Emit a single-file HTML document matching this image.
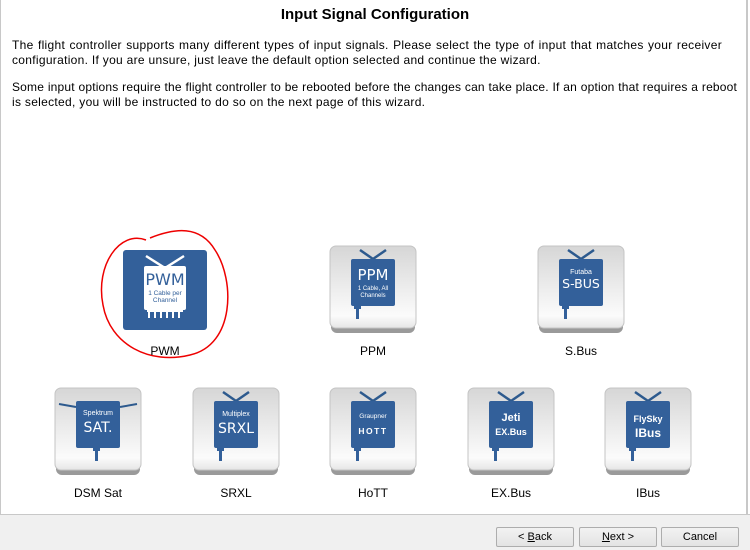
<!DOCTYPE html>
<html><head><meta charset="utf-8"><style>
*{margin:0;padding:0;box-sizing:border-box}
body{width:750px;height:550px;background:#fff;font-family:"Liberation Sans",sans-serif;position:relative;overflow:hidden;color:#000}
.t{position:absolute;font-size:12px;line-height:15px;left:12px;white-space:nowrap;letter-spacing:0.3px;text-align:justify;text-align-last:justify}
h1{position:absolute;top:6px;left:0;width:750px;text-align:center;font-size:15px;font-weight:bold}
.lbl{position:absolute;font-size:12px;width:120px;text-align:center}
.bar{position:absolute;left:0;top:514px;width:750px;height:36px;background:#f0f0f0;border-top:1px solid #c8c8c8}
.btn{position:absolute;top:527px;width:78px;height:20px;border:1px solid #adadad;border-radius:2px;background:linear-gradient(#f2f2f2,#e3e3e3);font-size:11px;text-align:center;line-height:18px}
</style></head><body>
<div style="position:absolute;left:0;top:0;width:1px;height:514px;background:#c8c8c8"></div>
<div style="position:absolute;left:746px;top:0;width:2px;height:514px;background:#c8c8c8"></div>
<h1>Input Signal Configuration</h1>
<div class="t" style="top:38px;width:710px">The flight controller supports many different types of input signals. Please select the type of input that matches your receiver</div>
<div class="t" style="top:53px;width:518px">configuration. If you are unsure, just leave the default option selected and continue the wizard.</div>
<div class="t" style="top:80px;width:725px;letter-spacing:0.18px">Some input options require the flight controller to be rebooted before the changes can take place. If an option that requires a reboot</div>
<div class="t" style="top:95px;width:404px">is selected, you will be instructed to do so on the next page of this wizard.</div>

<svg width="750" height="514" style="position:absolute;left:0;top:0">
<defs>
<linearGradient id="g" x1="0" y1="0" x2="0" y2="1"><stop offset="0" stop-color="#d6d6d6"/><stop offset="0.5" stop-color="#ececec"/><stop offset="0.85" stop-color="#fbfbfb"/><stop offset="1" stop-color="#e6e6e6"/></linearGradient>
<g id="frame"><rect x="1" y="3" width="84" height="84" rx="6" fill="#9a9a9a"/><rect x="0" y="0" width="86" height="82" rx="6" fill="url(#g)" stroke="#c4c4c4"/></g>
<g id="tv"><path d="M30 4 L43 13 L56 4" stroke="#2d5a8e" stroke-width="2.5" fill="none"/><rect x="21" y="13" width="44" height="47" rx="2" fill="#33609a"/><rect x="26" y="60" width="3" height="13" fill="#33609a"/><rect x="24" y="60" width="7" height="3" fill="#33609a"/></g>
</defs>
<rect x="123" y="250" width="84" height="80" rx="3" fill="#33609a"/>
<path d="M146 256 L165 268 L184 256" stroke="#fff" stroke-width="2.5" fill="none"/>
<rect x="144" y="266" width="42" height="44" rx="2" fill="#fff"/>
<text x="165" y="285" font-size="16" fill="#33609a" text-anchor="middle" font-family="DejaVu Sans">PWM</text>
<text x="165" y="295" font-size="6.5" fill="#33609a" text-anchor="middle">1 Cable per</text>
<text x="165" y="302" font-size="6.5" fill="#33609a" text-anchor="middle">Channel</text>
<g fill="#fff"><rect x="147" y="310" width="36" height="2"/><rect x="148" y="310" width="2" height="8"/><rect x="154" y="310" width="2" height="8"/><rect x="160" y="310" width="2" height="8"/><rect x="166" y="310" width="2" height="8"/><rect x="172" y="310" width="2" height="8"/><rect x="178" y="310" width="2" height="8"/></g>
<path d="M146 240 C120 230 95 265 103 305 C110 345 150 365 190 355 C235 345 235 280 215 250 C200 225 175 228 150 238" stroke="#e00" stroke-width="1.5" fill="none"/>

<g transform="translate(330,246)"><use href="#frame"/><use href="#tv"/>
<text x="43" y="34" font-size="15" fill="#fff" text-anchor="middle" font-family="DejaVu Sans">PPM</text>
<text x="43" y="44" font-size="6" fill="#fff" text-anchor="middle">1 Cable, All</text>
<text x="43" y="51" font-size="6" fill="#fff" text-anchor="middle">Channels</text></g>

<g transform="translate(538,246)"><use href="#frame"/><use href="#tv"/>
<text x="43" y="28" font-size="7" fill="#fff" text-anchor="middle">Futaba</text>
<text x="43" y="42" font-size="12.5" fill="#fff" text-anchor="middle" font-family="DejaVu Sans">S-BUS</text></g>

<g transform="translate(55,388)"><use href="#frame"/><rect x="21" y="13" width="44" height="47" rx="2" fill="#33609a"/><path d="M4 16 L21 19 M65 19 L82 16" stroke="#2d5a8e" stroke-width="2"/><rect x="40" y="60" width="3" height="13" fill="#33609a"/><rect x="38" y="60" width="7" height="3" fill="#33609a"/>
<text x="43" y="27" font-size="7" fill="#fff" text-anchor="middle">Spektrum</text>
<text x="43" y="44" font-size="14" fill="#fff" text-anchor="middle" font-family="DejaVu Sans">SAT.</text></g>

<g transform="translate(193,388)"><use href="#frame"/><use href="#tv"/>
<text x="43" y="28" font-size="7" fill="#fff" text-anchor="middle">Multiplex</text>
<text x="43" y="45" font-size="14" fill="#fff" text-anchor="middle" font-family="DejaVu Sans">SRXL</text></g>

<g transform="translate(330,388)"><use href="#frame"/><use href="#tv"/>
<text x="43" y="30" font-size="6.5" fill="#fff" text-anchor="middle">Graupner</text>
<text x="43" y="46" font-size="8.5" font-weight="bold" letter-spacing="1.5" fill="#fff" text-anchor="middle">HOTT</text></g>

<g transform="translate(468,388)"><use href="#frame"/><use href="#tv"/>
<text x="43" y="33" font-size="11" font-weight="bold" fill="#fff" text-anchor="middle">Jeti</text>
<text x="43" y="47" font-size="9" font-weight="bold" fill="#fff" text-anchor="middle">EX.Bus</text></g>

<g transform="translate(605,388)"><use href="#frame"/><use href="#tv"/>
<text x="43" y="34" font-size="9" font-weight="bold" fill="#fff" text-anchor="middle">FlySky</text>
<text x="43" y="49" font-size="12" font-weight="bold" fill="#fff" text-anchor="middle">IBus</text></g>
</svg>

<div class="lbl" style="left:105px;top:344px">PWM</div>
<div class="lbl" style="left:313px;top:344px">PPM</div>
<div class="lbl" style="left:521px;top:344px">S.Bus</div>
<div class="lbl" style="left:38px;top:486px">DSM Sat</div>
<div class="lbl" style="left:176px;top:486px">SRXL</div>
<div class="lbl" style="left:313px;top:486px">HoTT</div>
<div class="lbl" style="left:451px;top:486px">EX.Bus</div>
<div class="lbl" style="left:588px;top:486px">IBus</div>

<div class="bar"></div>
<div class="btn" style="left:496px">&lt; <u>B</u>ack</div>
<div class="btn" style="left:579px"><u>N</u>ext &gt;</div>
<div class="btn" style="left:661px">Cancel</div>
</body></html>
